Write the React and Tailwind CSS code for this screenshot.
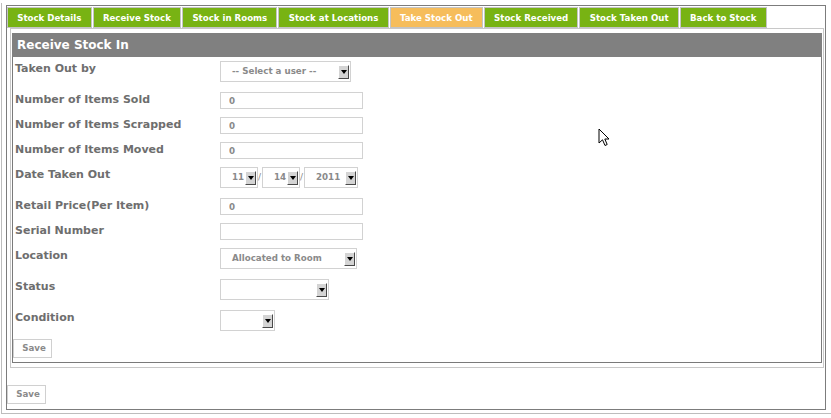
import React from 'react';

const tabs = [
  'Stock Details',
  'Receive Stock',
  'Stock in Rooms',
  'Stock at Locations',
  'Take Stock Out',
  'Stock Received',
  'Stock Taken Out',
  'Back to Stock',
];

const ArrowButton = () => (
  <span className="w-[11px] h-[14px] shrink-0 bg-[#d4d4d4] border border-t-white border-l-white border-r-[#4a4a4a] border-b-[#4a4a4a] flex justify-center pt-[4px]">
    <span className="w-0 h-0 border-l-[3px] border-r-[3px] border-t-[4px] border-l-transparent border-r-transparent border-t-black" />
  </span>
);

const FakeSelect = ({ width, text }) => (
  <div className={`h-[21px] ${width} border border-[#d2d2d2] bg-white flex items-center justify-between pl-[11px] pr-[1px]`}>
    <span className="text-[8.7px] font-bold text-[#8a8a8a] leading-none">{text}</span>
    <ArrowButton />
  </div>
);

const TextBox = ({ value }) => (
  <input
    readOnly
    defaultValue={value}
    className="w-[143px] h-[17px] border border-[#d2d2d2] bg-white pl-[8px] text-[8.7px] font-bold text-[#8a8a8a] outline-none"
  />
);

const Row = ({ label, tall, children }) => (
  <div className={`flex items-start ${tall ? 'h-[31px]' : 'h-[25px]'}`}>
    <div className="w-[207px] pl-[2px] pt-[1px] text-[11px] leading-[13px] font-bold text-[#6e6e6e]">{label}</div>
    {children}
  </div>
);

const SaveButton = () => (
  <button className="w-[39px] h-[19px] border border-[#d0d0d0] bg-white text-[8.7px] font-bold text-[#8a8a8a] flex items-center justify-center pl-[3px]">
    Save
  </button>
);

export default function App() {
  return (
    <div className="relative w-[831px] h-[418px] bg-white font-['DejaVu_Sans',sans-serif] overflow-hidden">
      <div className="mt-[3px] ml-[1px] pt-[2px] pl-[4px] pb-[3px] border-l border-b border-[#bdbdbd] w-[840px]">
        <div className="w-[820px] h-[405px] border border-[#7c7c7c] pt-[1px] flex flex-col">
          {/* tab bar */}
          <div className="flex gap-[1px] h-[21px]">
            {tabs.map((t) => (
              <div
                key={t}
                className={`h-[21px] px-[9.25px] pt-[1px] border border-[#c4c4c4] flex items-center text-[8.65px] font-bold text-white whitespace-nowrap ${
                  t === 'Take Stock Out' ? 'bg-[#f6bd5b]' : 'bg-[#78b313]'
                }`}
              >
                {t}
              </div>
            ))}
          </div>

          {/* content panel */}
          <div className="ml-[3px] w-[814px] h-[340px] border border-[#c8c8c8] px-[1px] pt-[4px] pb-[4px]">
            <div className="h-full border border-[#7a7a7a] flex flex-col">
              <div className="h-[24px] -mt-[1px] -mx-[1px] bg-[#808080] flex items-center pl-[5px] text-[12px] font-bold text-white">
                Receive Stock In
              </div>
              <div className="pt-[4px] flex flex-col">
                <Row label="Taken Out by" tall>
                  <FakeSelect width="w-[131px]" text="-- Select a user --" />
                </Row>
                <Row label="Number of Items Sold">
                  <TextBox value="0" />
                </Row>
                <Row label="Number of Items Scrapped">
                  <TextBox value="0" />
                </Row>
                <Row label="Number of Items Moved">
                  <TextBox value="0" />
                </Row>
                <Row label="Date Taken Out" tall>
                  <div className="flex items-center">
                    <FakeSelect width="w-[38px]" text="11" />
                    <span className="w-[4px] text-[9px] text-[#8a8a8a] leading-none">/</span>
                    <FakeSelect width="w-[38px]" text="14" />
                    <span className="w-[4px] text-[9px] text-[#8a8a8a] leading-none">/</span>
                    <FakeSelect width="w-[54px]" text="2011" />
                  </div>
                </Row>
                <Row label="Retail Price(Per Item)">
                  <TextBox value="0" />
                </Row>
                <Row label="Serial Number">
                  <TextBox value="" />
                </Row>
                <Row label="Location" tall>
                  <FakeSelect width="w-[137px]" text="Allocated to Room" />
                </Row>
                <Row label="Status" tall>
                  <FakeSelect width="w-[109px]" text="" />
                </Row>
                <Row label="Condition" tall>
                  <FakeSelect width="w-[55px]" text="" />
                </Row>
                <div className="-mt-[2px]">
                  <SaveButton />
                </div>
              </div>
            </div>
          </div>

          <div className="pt-[17px]">
            <SaveButton />
          </div>
        </div>
      </div>

      {/* mouse pointer */}
      <svg className="absolute left-[598px] top-[128px]" width="12" height="19" viewBox="0 0 12 19">
        <path
          d="M1 1 L1 15 L4.5 11.8 L7 17.5 L9.2 16.5 L6.8 11 L11 11 Z"
          fill="white"
          stroke="black"
          strokeWidth="1"
          strokeLinejoin="miter"
        />
      </svg>
    </div>
  );
}
